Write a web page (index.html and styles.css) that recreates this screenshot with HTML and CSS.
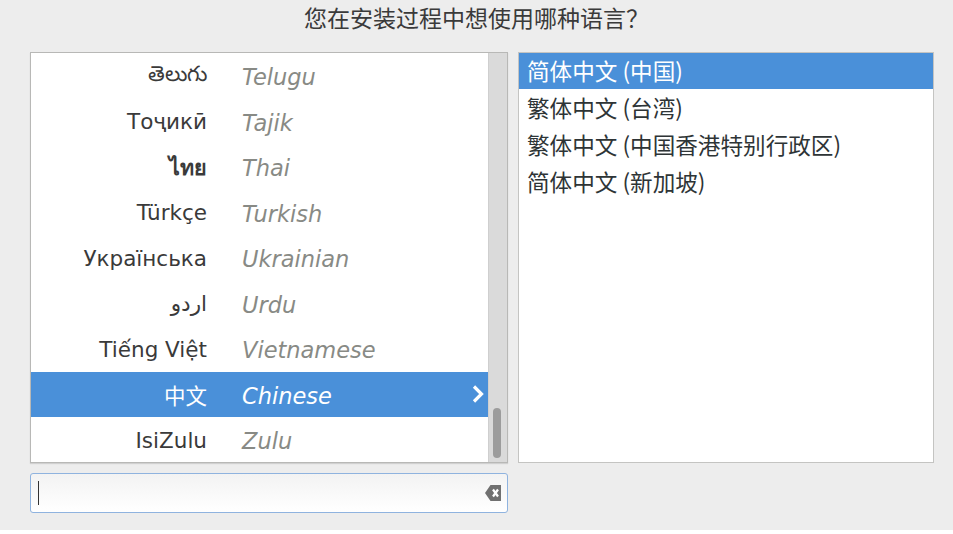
FILE: index.html
```html
<!DOCTYPE html>
<html lang="zh-CN">
<head>
    <meta charset="UTF-8">
    <meta name="viewport" content="width=device-width, initial-scale=1.0">
    <title>语言选择</title>
    <link rel="stylesheet" href="styles.css">
</head>
<body>
    <div class="page">
        <h1 class="title">您在安装过程中想使用哪种语言？</h1>
        <div class="panes">
            <div class="left">
                <div class="langbox">
                    <ul class="langs">
                        <li><span class="native">తెలుగు</span><span class="english">Telugu</span></li>
                        <li><span class="native">Тоҷикӣ</span><span class="english">Tajik</span></li>
                        <li><span class="native thai">ไทย</span><span class="english">Thai</span></li>
                        <li><span class="native">Türkçe</span><span class="english">Turkish</span></li>
                        <li><span class="native">Українська</span><span class="english">Ukrainian</span></li>
                        <li><span class="native">اردو</span><span class="english">Urdu</span></li>
                        <li><span class="native">Tiếng Việt</span><span class="english">Vietnamese</span></li>
                        <li class="selected">
                            <span class="native">中文</span><span class="english">Chinese</span>
                            <svg class="chevron" width="14" height="20" viewBox="0 0 14 20">
                                <path d="M3 2.5 L10.5 10 L3 17.5" fill="none" stroke="#fff" stroke-width="3.2"/>
                            </svg>
                        </li>
                        <li><span class="native">IsiZulu</span><span class="english">Zulu</span></li>
                    </ul>
                    <div class="scrollbar"><div class="thumb"></div></div>
                </div>
                <div class="search">
                    <span class="cursor"></span>
                    <svg class="clear" width="17" height="18" viewBox="0 0 17 18">
                        <path d="M5.5 1 H16 V17 H5.5 L0 9 Z" fill="#707070"/>
                        <path d="M8 5.5 L13 12.5 M13 5.5 L8 12.5" stroke="#fff" stroke-width="2.2"/>
                    </svg>
                </div>
            </div>
            <ul class="locales">
                <li class="selected">简体中文 (中国)</li>
                <li>繁体中文 (台湾)</li>
                <li>繁体中文 (中国香港特别行政区)</li>
                <li>简体中文 (新加坡)</li>
            </ul>
        </div>
    </div>
</body>
</html>
```

FILE: styles.css
```css
body {
    margin: 0;
    background: #ffffff;
    font-family: "DejaVu Sans", "Noto Sans", "Noto Sans CJK SC", sans-serif;
    color: #2e3436;
}
.page {
    height: 530px;
    background: #ededed;
    box-sizing: border-box;
}
.title {
    margin: 0;
    height: 52px;
    box-sizing: border-box;
    text-align: center;
    font-weight: normal;
    font-size: 23px;
    line-height: normal;
    font-family: "Noto Sans CJK SC", sans-serif;
    color: #3a3a3a;
}
.panes {
    display: flex;
    gap: 10px;
    padding-left: 30px;
}
.left {
    width: 478px;
}
.langbox {
    display: flex;
    height: 411px;
    background: #fff;
    border: 1px solid #b8b8b6;
    box-sizing: border-box;
    box-shadow: 0 1px 1px rgba(0, 0, 0, 0.12);
}
.langs {
    list-style: none;
    margin: 0;
    padding: 0;
    flex: 1;
}
.langs li {
    display: flex;
    align-items: center;
    height: 45.5px;
    position: relative;
}
.native {
    width: 176px;
    text-align: right;
    font-size: 21.5px;
    color: #3a3a3a;
    padding-top: 1px;
}
.thai {
    font-weight: bold;
}
.english {
    margin-left: 35px;
    font-style: italic;
    font-size: 22.5px;
    color: #888a85;
    padding-top: 3px;
}
.langs li.selected {
    background: #4a90d9;
}
.langs li.selected .native,
.langs li.selected .english {
    color: #fff;
}
.chevron {
    position: absolute;
    right: 3px;
    top: 12px;
}
.scrollbar {
    width: 18px;
    background: #dadada;
    border-left: 1px solid #cfcfcf;
    position: relative;
}
.thumb {
    position: absolute;
    left: 4px;
    top: 355px;
    width: 8px;
    height: 50px;
    border-radius: 4px;
    background: #9c9c9c;
}
.search {
    margin-top: 10px;
    height: 40px;
    border: 1px solid #8fb3df;
    border-radius: 3px;
    background: linear-gradient(#f3f3f3, #ffffff);
    box-sizing: border-box;
    display: flex;
    align-items: center;
    justify-content: space-between;
    padding: 0 5px 0 7px;
}
.cursor {
    width: 1px;
    height: 24px;
    background: #333;
}
.locales {
    list-style: none;
    margin: 0;
    padding: 0;
    width: 416px;
    height: 411px;
    background: #fff;
    border: 1px solid #c4c4c2;
    box-sizing: border-box;
    font-size: 22.6px;
    font-family: "Noto Sans CJK SC", sans-serif;
}
.locales li {
    height: 37px;
    line-height: 37px;
    padding-left: 8px;
    color: #2e3436;
}
.locales li.selected {
    background: #4a90d9;
    color: #fff;
    height: 36px;
    line-height: 36px;
}
```
